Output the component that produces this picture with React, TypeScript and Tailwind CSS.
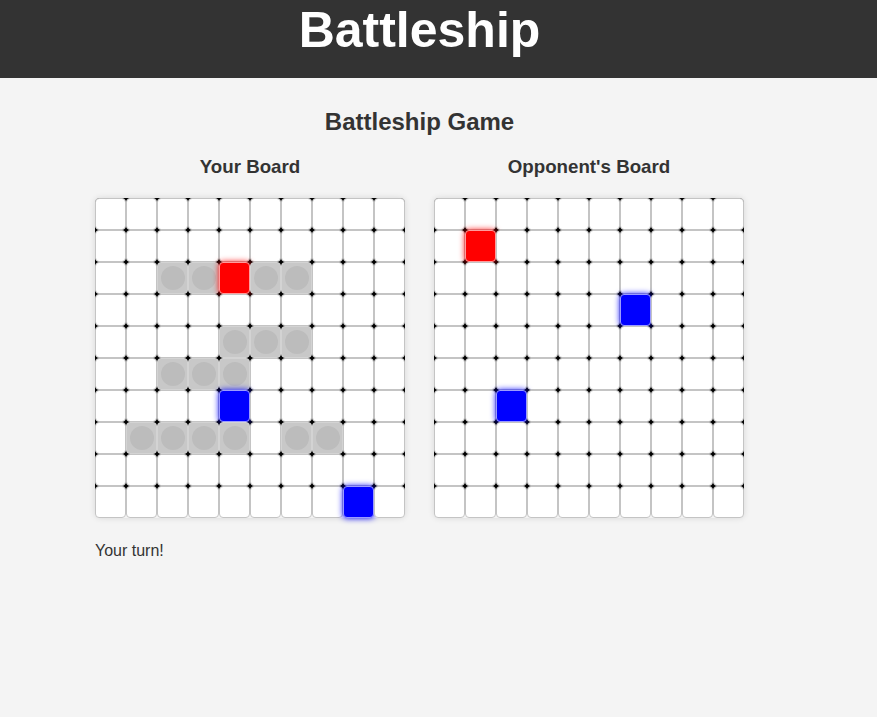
import React from 'react'

type Mark = 'empty' | 'ship' | 'hit' | 'miss'

const SIZE = 10

function makeBoard(ships: [number, number][], hits: [number, number][], misses: [number, number][]) {
  const board: Mark[][] = Array.from({ length: SIZE }, () => Array<Mark>(SIZE).fill('empty'))
  ships.forEach(([r, c]) => (board[r][c] = 'ship'))
  hits.forEach(([r, c]) => (board[r][c] = 'hit'))
  misses.forEach(([r, c]) => (board[r][c] = 'miss'))
  return board
}

const yourBoard = makeBoard(
  [
    [2, 2], [2, 3], [2, 4], [2, 5], [2, 6],
    [4, 4], [4, 5], [4, 6],
    [5, 2], [5, 3], [5, 4],
    [7, 1], [7, 2], [7, 3], [7, 4],
    [7, 6], [7, 7],
  ],
  [[2, 4]],
  [[6, 4], [9, 8]]
)

const opponentBoard = makeBoard([], [[1, 1]], [[3, 6], [6, 2]])

function Cell({ mark }: { mark: Mark }) {
  if (mark === 'ship') {
    return (
      <div className="flex items-center justify-center rounded-[4px] border border-[#d3d3d3] bg-[#c8c8c8]">
        <div className="h-6 w-6 rounded-full bg-[#bcbcbc]" />
      </div>
    )
  }
  if (mark === 'hit') {
    return <div className="rounded-[4px] border border-[#ff9c9c] bg-[#ff0000] shadow-[0_0_6px_#ff0000]" />
  }
  if (mark === 'miss') {
    return <div className="rounded-[4px] border border-[#9c9cff] bg-[#0000ff] shadow-[0_0_6px_#0000ff]" />
  }
  return <div className="rounded-[4px] border border-[#c4c4c4] bg-white" />
}

function Board({ title, board }: { title: string; board: Mark[][] }) {
  return (
    <div className="flex w-[310px] flex-col items-center">
      <h3 className="text-[18.72px] font-bold leading-[22px] text-[#333]">{title}</h3>
      <div className="mt-[20px] grid grid-cols-[repeat(10,31px)] grid-rows-[repeat(10,32px)] rounded-[5px] bg-[linear-gradient(#000,#000)] bg-[length:100%_calc(100%-4px)] bg-no-repeat shadow-[0_0_6px_rgba(0,0,0,0.12)]">
        {board.flatMap((row, r) => row.map((mark, c) => <Cell key={`${r}-${c}`} mark={mark} />))}
      </div>
    </div>
  )
}

export default function App() {
  return (
    <div className="min-h-[717px] bg-[#f4f4f4] font-['Liberation_Sans',Arial,sans-serif] text-[#333]">
      <header className="h-[78px] bg-[#333333]">
        <div className="w-[839px] pt-[3px] text-center">
          <h1 className="text-[50px] font-bold leading-[54px] text-white">Battleship</h1>
        </div>
      </header>

      <main className="w-[839px]">
        <div className="mx-auto w-[649px] pt-[30px]">
          <h2 className="text-center text-[24px] font-bold leading-[28px]">Battleship Game</h2>
          <div className="mt-[20px] flex gap-[29px]">
            <Board title="Your Board" board={yourBoard} />
            <Board title="Opponent's Board" board={opponentBoard} />
          </div>
          <p className="mt-[24px] text-[16px] leading-[18px]">Your turn!</p>
        </div>
      </main>
    </div>
  )
}
